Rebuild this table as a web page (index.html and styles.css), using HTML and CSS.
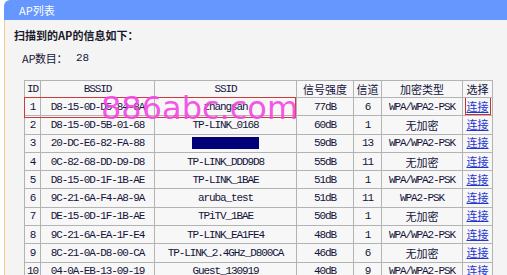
FILE: index.html
```html
<!DOCTYPE html>
<html>
<head>
<meta charset="utf-8">
<link rel="stylesheet" href="styles.css">
</head>
<body>
<div class="panel">
  <div class="titlebar">AP列表</div>
  <div class="content">
    <div class="lead">扫描到的AP的信息如下：</div>
    <div class="count"><span class="count-label">AP数目：</span><span class="count-num">28</span></div>
    <div class="tablewrap">
      <table class="aps">
        <colgroup>
          <col class="c-id"><col class="c-bssid"><col class="c-ssid"><col class="c-sig"><col class="c-ch"><col class="c-enc"><col class="c-sel">
        </colgroup>
        <thead>
          <tr><th class="m">ID</th><th class="m">BSSID</th><th class="m">SSID</th><th>信号强度</th><th>信道</th><th>加密类型</th><th>选择</th></tr>
        </thead>
        <tbody>
          <tr><td>1</td><td>D8-15-0D-D5-84-8A</td><td>zhangsan</td><td>77dB</td><td>6</td><td>WPA/WPA2-PSK</td><td><a class="link boxed">连接</a></td></tr>
          <tr><td>2</td><td>D8-15-0D-5B-01-68</td><td>TP-LINK_0168</td><td>60dB</td><td>1</td><td class="zh">无加密</td><td><a class="link">连接</a></td></tr>
          <tr><td>3</td><td>20-DC-E6-82-FA-88</td><td><span class="redact"></span></td><td>59dB</td><td>13</td><td>WPA/WPA2-PSK</td><td><a class="link">连接</a></td></tr>
          <tr><td>4</td><td>0C-82-68-DD-D9-D8</td><td>TP-LINK_DDD9D8</td><td>55dB</td><td>11</td><td class="zh">无加密</td><td><a class="link">连接</a></td></tr>
          <tr><td>5</td><td>D8-15-0D-1F-1B-AE</td><td>TP-LINK_1BAE</td><td>51dB</td><td>1</td><td>WPA/WPA2-PSK</td><td><a class="link">连接</a></td></tr>
          <tr><td>6</td><td>9C-21-6A-F4-A8-9A</td><td>aruba_test</td><td>51dB</td><td>11</td><td>WPA2-PSK</td><td><a class="link">连接</a></td></tr>
          <tr><td>7</td><td>DE-15-0D-1F-1B-AE</td><td>TPiTV_1BAE</td><td>50dB</td><td>1</td><td class="zh">无加密</td><td><a class="link">连接</a></td></tr>
          <tr><td>8</td><td>9C-21-6A-EA-1F-E4</td><td>TP-LINK_EA1FE4</td><td>48dB</td><td>1</td><td>WPA/WPA2-PSK</td><td><a class="link">连接</a></td></tr>
          <tr><td>9</td><td>8C-21-0A-D8-00-CA</td><td>TP-LINK_2.4GHz_D800CA</td><td>46dB</td><td>6</td><td class="zh">无加密</td><td><a class="link">连接</a></td></tr>
          <tr><td>10</td><td>04-0A-EB-13-09-19</td><td>Guest_130919</td><td>40dB</td><td>9</td><td>WPA/WPA2-PSK</td><td><a class="link">连接</a></td></tr>
        </tbody>
      </table>
      <div class="rowmark"></div>
      <div class="watermark">886abc.com</div>
    </div>
  </div>
</div>
</body>
</html>
```

FILE: styles.css
```css
html, body {
  margin: 0;
  padding: 0;
  background: #ffffff;
}
body {
  width: 507px;
  height: 275px;
  overflow: hidden;
  font-family: "Liberation Mono", monospace;
  color: #14143a;
}
.panel {
  margin-left: 4px;
}
.titlebar {
  height: 20px;
  line-height: 20px;
  background: #6597fe;
  border-top-left-radius: 6px;
  color: #ffffff;
  font-family: "Noto Sans CJK SC", "Noto Sans", sans-serif;
  font-size: 11px;
  padding-left: 15px;
}
.content {
  background: #f4f4f4;
  border-left: 1px solid #f5c98a;
  padding: 8px 0 0 9px;
  height: 300px;
}
.lead {
  font-family: "Noto Sans CJK SC", sans-serif;
  font-weight: bold;
  font-size: 11px;
  line-height: 14px;
  color: #1a1a2a;
}
.count {
  margin-top: 9px;
  margin-left: 8px;
  font-size: 11px;
  line-height: 14px;
  display: flex;
  align-items: center;
}
.count-label {
  font-family: "Noto Sans CJK SC", sans-serif;
  width: 54px;
  letter-spacing: -0.3px;
}
.count-num {
  font-family: "Liberation Mono", monospace;
}
.tablewrap {
  position: relative;
  margin-top: 15px;
  margin-left: 10px;
  width: 468px;
}
.aps {
  border-collapse: collapse;
  table-layout: fixed;
  width: 468px;
  background: #f7f7f7;
  border: 1px solid #a9a9a9;
}
.c-id { width: 16px; }
.c-bssid { width: 114px; }
.c-ssid { width: 142px; }
.c-sig { width: 57px; }
.c-ch { width: 28px; }
.c-enc { width: 81px; }
.c-sel { width: 30px; }
.aps th, .aps td {
  border: 1px solid #b3b3b3;
  padding: 0;
  text-align: center;
  white-space: nowrap;
  overflow: hidden;
  font-weight: normal;
}
.aps th {
  height: 16px;
  font-family: "Noto Sans CJK SC", sans-serif;
  font-size: 11px;
  line-height: 14px;
}
.aps th.m {
  font-family: "Liberation Mono", monospace;
  letter-spacing: -1.1px;
}
.aps td {
  height: 17.3px;
  font-family: "Liberation Mono", monospace;
  font-size: 11px;
  letter-spacing: -1.1px;
  line-height: 14px;
}
.aps td.zh {
  font-family: "Noto Sans CJK SC", sans-serif;
  letter-spacing: 0;
}
.link {
  font-family: "Noto Sans CJK SC", sans-serif;
  letter-spacing: 0;
  color: #1f35d0;
  text-decoration: underline;
  padding: 0 1px;
}
.link.boxed {
  outline: 1px solid #c83030;
  outline-offset: 0;
}
.redact {
  display: inline-block;
  width: 67px;
  height: 12px;
  background: #000078;
  vertical-align: middle;
}
.rowmark {
  position: absolute;
  left: 0;
  top: 17px;
  width: 270px;
  height: 19px;
  border: 1px solid #cc3a3a;
  pointer-events: none;
}
.watermark {
  position: absolute;
  left: 77px;
  top: 10px;
  font-family: "DejaVu Sans", sans-serif;
  font-size: 32px;
  line-height: 36px;
  color: rgba(244, 70, 228, 0.92);
  white-space: nowrap;
  pointer-events: none;
}
```
